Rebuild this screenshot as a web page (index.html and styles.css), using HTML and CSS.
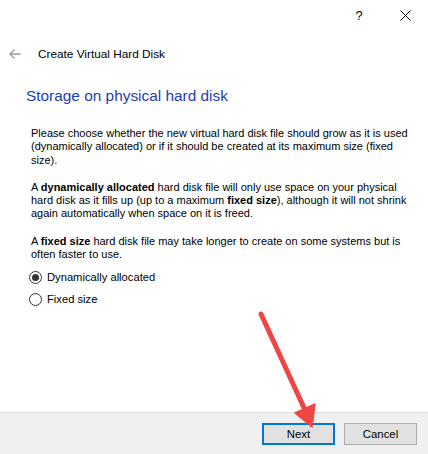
FILE: index.html
```html
<!DOCTYPE html>
<html>
<head>
<meta charset="utf-8">
<link rel="stylesheet" href="styles.css">
</head>
<body>
<div class="window">
  <div class="titlebar">
    <span class="tb-help">?</span>
    <span class="tb-close">
      <svg width="11" height="11" viewBox="0 0 11 11"><path d="M0.5 0.5 L10.5 10.5 M10.5 0.5 L0.5 10.5" stroke="#000" stroke-width="1" fill="none"/></svg>
    </span>
  </div>
  <div class="header">
    <svg class="back" width="12" height="10" viewBox="0 0 12 10"><path d="M11.5 5 H1 M5.5 0.5 L1 5 L5.5 9.5" stroke="#9a9a9a" stroke-width="1.3" fill="none"/></svg>
    <span class="header-title">Create Virtual Hard Disk</span>
  </div>
  <div class="main">
    <h1 class="instruction">Storage on physical hard disk</h1>
    <div class="content">
      <p>Please choose whether the new virtual hard disk file should grow as it is used (dynamically allocated) or if it should be created at its maximum size (fixed size).</p>
      <p>A <b>dynamically allocated</b> hard disk file will only use space on your physical hard disk as it fills up (up to a maximum <b>fixed size</b>), although it will not shrink again automatically when space on it is freed.</p>
      <p>A <b>fixed size</b> hard disk file may take longer to create on some systems but is often faster to use.</p>
    </div>
    <div class="radios">
      <div class="radio"><span class="dot checked"></span><span>Dynamically allocated</span></div>
      <div class="radio"><span class="dot"></span><span>Fixed size</span></div>
    </div>
  </div>
  <div class="footer">
    <button class="btn primary">Next</button>
    <button class="btn">Cancel</button>
  </div>
  <svg class="annotation" width="428" height="454" viewBox="0 0 428 454">
    <line x1="261" y1="314" x2="305" y2="410" stroke="#f04545" stroke-width="5" stroke-linecap="round"/>
    <polygon points="295,413 315,404 312,427" fill="#f04545" stroke="#f04545" stroke-width="1.5" stroke-linejoin="round"/>
  </svg>
</div>
</body>
</html>
```
FILE: styles.css
```css
html, body {
  margin: 0;
  padding: 0;
}
body {
  font-family: "Liberation Sans", Arial, sans-serif;
  font-size: 12px;
  color: #000;
  background: #fff;
}
.window {
  position: relative;
  width: 428px;
  height: 454px;
  display: flex;
  flex-direction: column;
  background: #fff;
  overflow: hidden;
}
.titlebar {
  height: 30px;
  display: flex;
  justify-content: flex-end;
  align-items: center;
}
.tb-help {
  width: 46px;
  text-align: center;
  font-size: 13px;
  margin-right: 0;
}
.tb-close {
  width: 46px;
  display: flex;
  justify-content: center;
  align-items: center;
}
.header {
  display: flex;
  align-items: center;
  height: 20px;
  margin-top: 14px;
  padding-left: 9px;
}
.back {
  margin-right: 17px;
}
.header-title {
  font-size: 11.8px;
}
.main {
  flex: 1;
  padding-left: 26px;
  padding-right: 18px;
}
.instruction {
  margin: 21px 0 0 0;
  font-size: 15.4px;
  font-weight: normal;
  color: #1c40b0;
  line-height: 22px;
}
.content {
  padding-left: 5px;
  margin-top: 20px;
}
.content p {
  margin: 0 0 14px 0;
  line-height: 13.3px;
  font-size: 11px;
}
.content p:last-child {
  margin-bottom: 0;
}
.radios {
  padding-left: 3px;
  margin-top: 5px;
}
.radio {
  display: flex;
  align-items: center;
  height: 22px;
  font-size: 11.2px;
}
.dot {
  box-sizing: border-box;
  width: 13px;
  height: 13px;
  border: 1px solid #333;
  border-radius: 50%;
  margin-right: 5px;
  position: relative;
  background: #fff;
}
.dot.checked::after {
  content: "";
  position: absolute;
  left: 2px;
  top: 2px;
  width: 7px;
  height: 7px;
  border-radius: 50%;
  background: #333;
}
.footer {
  height: 41px;
  background: #f0f0f0;
  border-top: 1px solid #dfdfdf;
  display: flex;
  justify-content: flex-end;
  align-items: center;
  padding-right: 11px;
  gap: 9px;
}
.btn {
  box-sizing: border-box;
  width: 73px;
  height: 22px;
  background: #e1e1e1;
  border: 1px solid #adadad;
  font-family: inherit;
  font-size: 11.4px;
  padding: 0;
  color: #000;
}
.btn.primary {
  border: 2px solid #0078d7;
}
.annotation {
  position: absolute;
  left: 0;
  top: 0;
  pointer-events: none;
}
```
